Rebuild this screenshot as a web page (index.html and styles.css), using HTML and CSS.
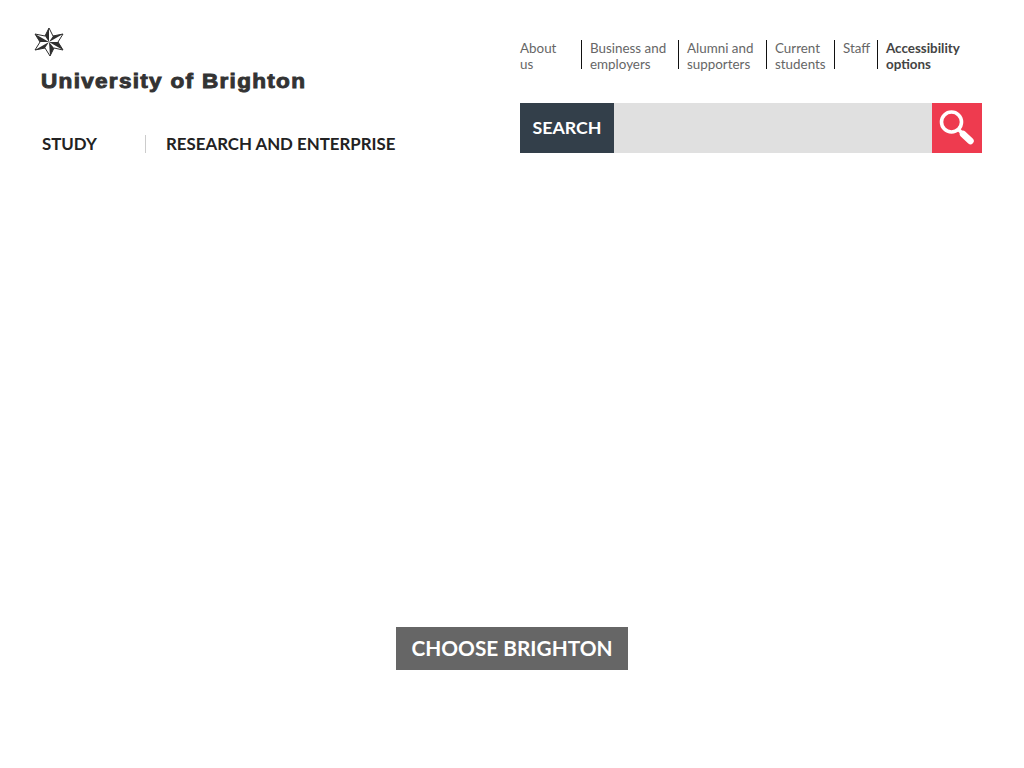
FILE: index.html
```html
<!DOCTYPE html>
<html>
<head>
  <title>University of Brighton</title>
  <link rel="stylesheet" href="styles.css">
</head>
<body>
  <header class="header">
    <div class="brand">
      <a class="logo" href="#">
        <svg class="logo-star" width="32" height="32" viewBox="0 0 32 32">
          <polygon points="16,1 20,9 30,7 25,15 30,23 21,21 17,29 12,21 2,23 7,15 2,7 12,9" fill="#fff" stroke="#2e2e2e" stroke-width="1"/>
          <polygon points="16,1 16,15 12,9" fill="#2e2e2e"/>
          <polygon points="30,7 16,15 20,9" fill="#2e2e2e"/>
          <polygon points="30,23 16,15 25,15" fill="#2e2e2e"/>
          <polygon points="17,29 16,15 21,21" fill="#2e2e2e"/>
          <polygon points="2,23 16,15 12,21" fill="#2e2e2e"/>
          <polygon points="2,7 16,15 7,15" fill="#2e2e2e"/>
        </svg>
        <span class="logo-name">University of Brighton</span>
      </a>
      <nav class="main-nav">
        <a class="main-study" href="#">STUDY</a>
        <a class="main-research" href="#">RESEARCH AND ENTERPRISE</a>
      </nav>
    </div>
    <div class="tools">
      <ul class="audience">
        <li class="aud-about"><a href="#">About<br>us</a></li>
        <li class="aud-business"><a href="#">Business and<br>employers</a></li>
        <li class="aud-alumni"><a href="#">Alumni and<br>supporters</a></li>
        <li class="aud-current"><a href="#">Current<br>students</a></li>
        <li class="aud-staff"><a href="#">Staff</a></li>
        <li class="aud-access"><a href="#">Accessibility<br>options</a></li>
      </ul>
      <form class="search">
        <label class="search-label" for="q">SEARCH</label>
        <input class="search-input" id="q" type="text">
        <button class="search-btn" type="button" aria-label="Search">
          <svg width="36" height="36" viewBox="0 0 36 36">
            <circle cx="12.5" cy="12" r="10" fill="none" stroke="#fff" stroke-width="3.6"/>
            <line x1="19" y1="19" x2="24" y2="24" stroke="#fff" stroke-width="3.6"/>
            <line x1="24" y1="24" x2="31.5" y2="31" stroke="#fff" stroke-width="6.5" stroke-linecap="round"/>
          </svg>
        </button>
      </form>
    </div>
  </header>
  <main class="hero">
    <a class="choose" href="#">CHOOSE BRIGHTON</a>
  </main>
</body>
</html>
```

FILE: styles.css
```css
html, body {
  margin: 0;
  padding: 0;
}

body {
  font-family: Lato, "Open Sans", sans-serif;
  background-color: #fff;
  color: #333;
}

a {
  color: inherit;
  text-decoration: none;
}

.header {
  display: flex;
  height: 126px;
  padding-top: 27px;
}

.brand {
  width: 520px;
  flex: none;
}

.logo {
  display: block;
  padding-left: 33px;
}

.logo-star {
  display: block;
}

.logo-name {
  display: block;
  margin: 10px 0 0 8px;
  font-family: "Liberation Sans", Arial, sans-serif;
  font-size: 20px;
  line-height: 24px;
  font-weight: 700;
  letter-spacing: 1.15px;
  color: #333;
  white-space: nowrap;
  -webkit-text-stroke: 0.9px #333;
  transform: scaleX(1.127);
  transform-origin: left center;
}

.main-nav {
  display: flex;
  align-items: center;
  margin: 42px 0 0 42px;
  font-size: 16.85px;
  font-weight: 700;
  line-height: 18px;
  color: #222;
}

.main-study {
  width: 103px;
}

.main-research {
  border-left: 1px solid #ccc;
  padding-left: 20px;
}

.tools {
  width: 462px;
  flex: none;
}

.audience {
  display: flex;
  list-style: none;
  margin: 0;
  padding: 13px 0 0;
  height: 63px;
  font-size: 13.4px;
  line-height: 16px;
  color: #666;
}

.audience li {
  box-sizing: border-box;
  height: 29px;
  padding-left: 8px;
  border-left: 1px solid #111;
  white-space: nowrap;
}

.audience .aud-about {
  width: 61px;
  padding-left: 0;
  border-left: none;
}

.aud-business { width: 97px; }
.aud-alumni { width: 88px; }
.aud-current { width: 68px; }
.aud-staff { width: 43px; }

.audience .aud-access {
  font-weight: 700;
  color: #444;
}

.search {
  display: flex;
  height: 50px;
}

.search-label {
  width: 94px;
  background-color: #333f4a;
  color: #fff;
  font-size: 17.8px;
  font-weight: 700;
  line-height: 49px;
  text-align: center;
}

.search-input {
  flex: 1;
  min-width: 0;
  border: none;
  padding: 0 12px;
  background-color: #e0e0e0;
}

.search-btn {
  display: flex;
  align-items: center;
  justify-content: center;
  width: 50px;
  padding: 0;
  border: none;
  background-color: #ee3b4f;
}

.hero {
  display: flex;
  justify-content: center;
  padding-top: 474px;
}

.choose {
  padding: 0 15.5px 1px;
  background-color: #666;
  color: #fff;
  font-size: 20.8px;
  font-weight: 700;
  line-height: 42px;
  white-space: nowrap;
}
```
